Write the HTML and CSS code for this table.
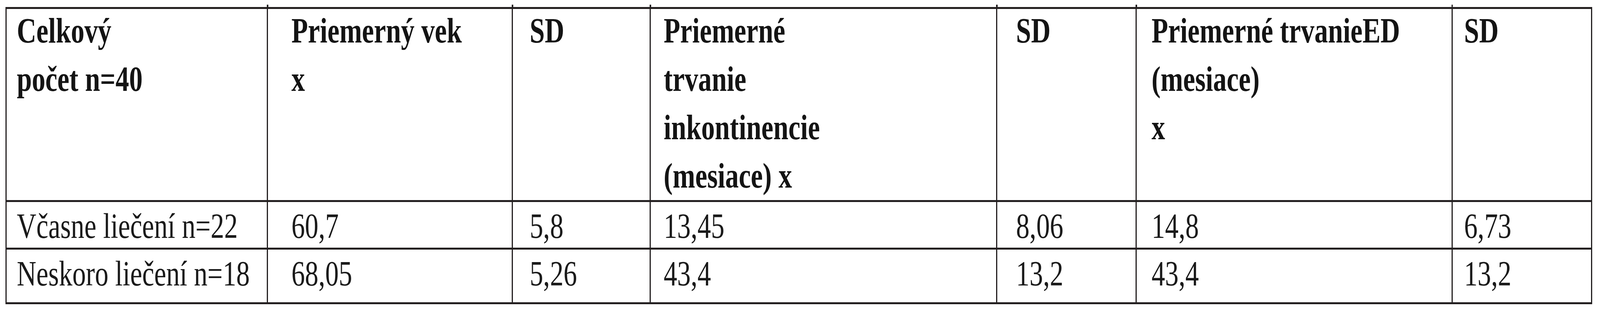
FILE: index.html
```html
<!DOCTYPE html>
<html lang="sk">
<head>
<meta charset="utf-8">
<title>Tabuľka</title>
<link rel="stylesheet" href="styles.css">
</head>
<body>
<div class="table">
  <div class="cell head c1 tick"><div class="tx hd">Celkový<br>počet n=40</div></div>
  <div class="cell head c2 tick"><div class="tx hd">Priemerný vek<br>x</div></div>
  <div class="cell head c3 tick"><div class="tx hd">SD</div></div>
  <div class="cell head c4 tick"><div class="tx hd">Priemerné<br>trvanie<br>inkontinencie<br>(mesiace) x</div></div>
  <div class="cell head c5 tick"><div class="tx hd">SD</div></div>
  <div class="cell head c6 tick"><div class="tx hd">Priemerné trvanieED<br>(mesiace)<br>x</div></div>
  <div class="cell head c7"><div class="tx hd">SD</div></div>

  <div class="cell c1"><div class="tx">Včasne liečení n=22</div></div>
  <div class="cell c2"><div class="tx">60,7</div></div>
  <div class="cell c3"><div class="tx">5,8</div></div>
  <div class="cell c4"><div class="tx">13,45</div></div>
  <div class="cell c5"><div class="tx">8,06</div></div>
  <div class="cell c6"><div class="tx">14,8</div></div>
  <div class="cell c7"><div class="tx">6,73</div></div>

  <div class="cell c1"><div class="tx">Neskoro liečení n=18</div></div>
  <div class="cell c2"><div class="tx">68,05</div></div>
  <div class="cell c3"><div class="tx">5,26</div></div>
  <div class="cell c4"><div class="tx">43,4</div></div>
  <div class="cell c5"><div class="tx">13,2</div></div>
  <div class="cell c6 tail"><div class="tx">43,4</div></div>
  <div class="cell c7"><div class="tx">13,2</div></div>
</div>
</body>
</html>
```

FILE: styles.css
```css
/* The table is designed on a 5386px-wide canvas.
   Horizontal measures follow the window width (--u = one canvas pixel);
   glyphs are squeezed by --sx when the window is narrower than the canvas. */
:root {
  --u: calc(100vw / 5386);
  --sx: 1;
  --line: #231f20;
}

@media (max-width: 5385px) {
  :root { --sx: 0.760490; }
}

html, body {
  margin: 0;
  padding: 0;
  background: #ffffff;
  overflow: hidden;
}

body {
  font-family: "Liberation Serif", "Times New Roman", serif;
  font-size: 91px;
  color: #1a1a1a;
  padding: 18px 0 0 calc(18 * var(--u));
}

.table {
  display: grid;
  grid-template-columns:
    calc(880 * var(--u))
    calc(825 * var(--u))
    calc(464 * var(--u))
    calc(1166 * var(--u))
    calc(470 * var(--u))
    calc(1063 * var(--u))
    calc(470 * var(--u));
  grid-template-rows: 495px 122px 140px;
  width: max-content;
  border-left: calc(5 * var(--u)) solid var(--line);
  border-top: 5px solid var(--line);
}

.cell {
  position: relative;
  box-sizing: border-box;
  border-right: calc(5 * var(--u)) solid var(--line);
  border-bottom: 5px solid var(--line);
  white-space: nowrap;
  line-height: 123px;
  min-width: 0;
}

.tx {
  transform-origin: 0 0;
  transform: scaleX(var(--sx));
}

.head {
  font-weight: bold;
  color: #141414;
  line-height: 124px;
}

.hd {
  margin-top: -6px;
}

.c1 { padding-left: calc(34 * var(--u)); }
.c2 { padding-left: calc(79 * var(--u)); }
.c3 { padding-left: calc(56 * var(--u)); }
.c4 { padding-left: calc(43 * var(--u)); }
.c5 { padding-left: calc(63 * var(--u)); }
.c6 { padding-left: calc(49 * var(--u)); }
.c7 { padding-left: calc(39 * var(--u)); }

.tick::after {
  content: "";
  position: absolute;
  top: -11px;
  right: calc(-5 * var(--u));
  width: calc(5 * var(--u));
  height: 11px;
  background: var(--line);
}

.tail::after {
  content: "";
  position: absolute;
  bottom: -12px;
  right: calc(-5 * var(--u));
  width: calc(5 * var(--u));
  height: 12px;
  background: var(--line);
}
```
